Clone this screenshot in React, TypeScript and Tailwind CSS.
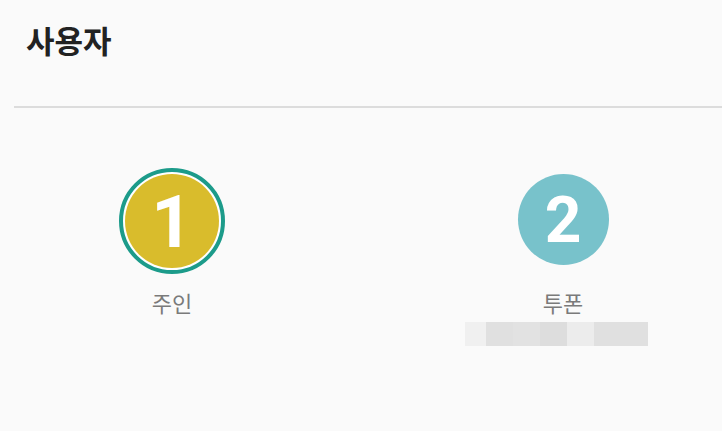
import React from "react";

const font = { fontFamily: '"Noto Sans CJK KR", "Noto Sans", sans-serif' };
const digitFont = { fontFamily: 'Roboto, "Noto Sans", sans-serif' };

const blocks = ["#f0f0f0", "#e0e0e0", "#e2e2e2", "#dddddd", "#ececec", "#e0e0e0", "#e0e0e0"];
const widths = [21, 27, 27, 27, 27, 27, 27];

export default function App() {
  return (
    <div className="w-[722px] h-[431px] bg-[#fafafa] overflow-hidden" style={font}>
      <div className="h-[106px] pl-[26px] pt-[19px]">
        <h1 className="text-[31px] leading-[42px] font-bold text-[#222222]">사용자</h1>
      </div>
      <div className="ml-[14px] h-[2px] bg-[#dcdcdc]" />
      <div className="flex pl-[72px] gap-[191px] pt-[60px]">
        <div className="w-[200px] flex flex-col items-center">
          <div className="w-[106px] h-[106px] rounded-full border-[4px] border-[#1c9b8a] bg-white p-[2px]">
            <div className="w-full h-full rounded-full bg-[#d9bc2c] flex items-center justify-center">
              <span className="text-white text-[72px] leading-none font-bold pt-[4px]" style={digitFont}>1</span>
            </div>
          </div>
          <div className="mt-[13px] text-[22px] leading-[30px] font-normal text-[#7a7a7a]">주인</div>
        </div>
        <div className="w-[200px] flex flex-col items-center">
          <div className="mt-[6px] w-[91px] h-[91px] rounded-full bg-[#78c2cb] flex items-center justify-center">
            <span className="text-white text-[64px] leading-none font-bold pt-[2px]" style={digitFont}>2</span>
          </div>
          <div className="mt-[22px] text-[22px] leading-[30px] font-normal text-[#7a7a7a]">투폰</div>
          <div className="mt-[5px] -ml-[14px] flex h-[24px]">
            {blocks.map((c, i) => (
              <div key={i} className="h-full" style={{ background: c, width: widths[i] }} />
            ))}
          </div>
        </div>
      </div>
    </div>
  );
}
